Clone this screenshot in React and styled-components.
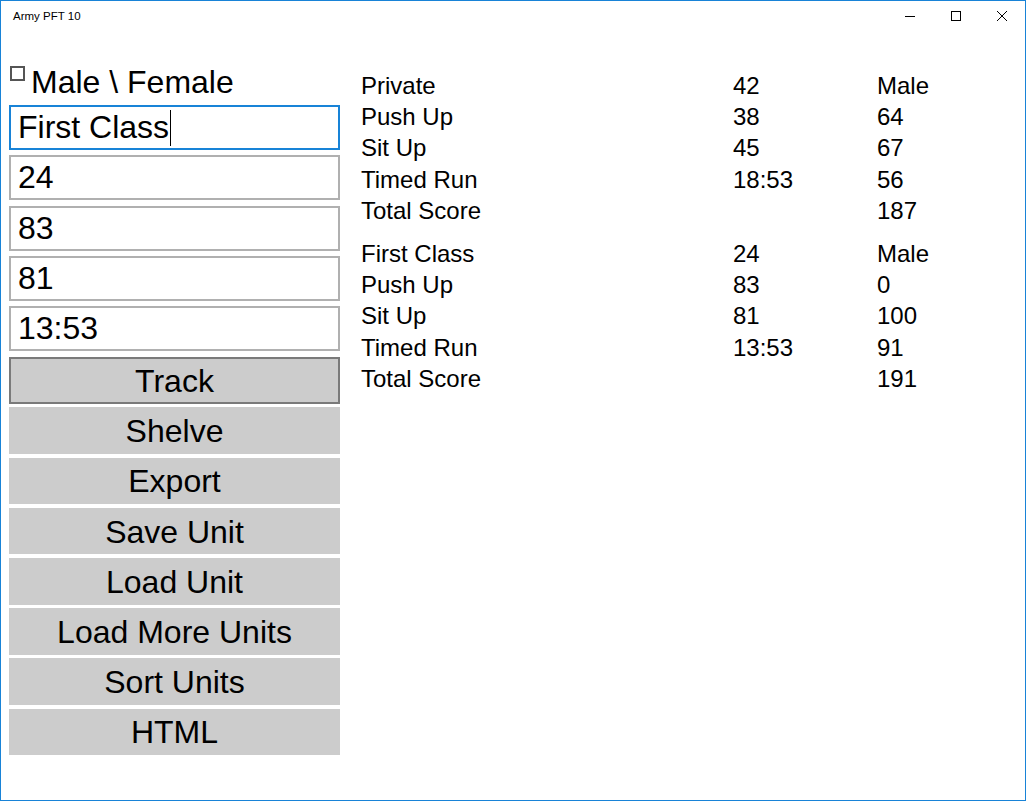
import React from "react";
import styled, { createGlobalStyle } from "styled-components";

const Global = createGlobalStyle`
  html, body { margin: 0; padding: 0; background: #fff; }
  * { box-sizing: border-box; }
`;

const Window = styled.div`
  width: 1026px;
  height: 801px;
  border: 1px solid #1883d7;
  background: #fff;
  display: flex;
  flex-direction: column;
  font-family: "Liberation Sans", Arial, sans-serif;
  color: #000;
  overflow: hidden;
`;

const TitleBar = styled.div`
  height: 31px;
  display: flex;
  align-items: center;
  justify-content: space-between;
  flex-shrink: 0;
`;

const Title = styled.div`
  font-family: "Liberation Sans", Arial, sans-serif;
  font-size: 11.5px;
  padding-left: 12px;
  padding-bottom: 2px;
`;

const Controls = styled.div`
  display: flex;
  height: 100%;
`;

const ControlButton = styled.div`
  width: 46px;
  height: 100%;
  display: flex;
  align-items: center;
  justify-content: center;
  padding-bottom: 1px;
`;

const Main = styled.div`
  display: flex;
  padding: 32px 0 0 8px;
  gap: 21px;
`;

const LeftColumn = styled.div`
  width: 331px;
  display: flex;
  flex-direction: column;
`;

const GenderRow = styled.label`
  display: flex;
  align-items: flex-start;
  height: 37px;
  gap: 6px;
  font-size: 32px;
  line-height: 37px;
  margin-bottom: 4px;
`;

const CheckBox = styled.span`
  width: 15px;
  height: 15px;
  margin: 2px 0 0 1px;
  border: 2px solid #555;
  background: #fff;
  flex-shrink: 0;
`;

const Fields = styled.div`
  display: flex;
  flex-direction: column;
  gap: 5.3px;
  margin-bottom: 6px;
`;

const Field = styled.div`
  height: 45px;
  border: 2px solid ${(p) => (p.$focused ? "#1883d7" : "#b0b0b0")};
  background: #fff;
  padding: 0 7px;
  font-size: 32px;
  line-height: 41px;
  white-space: nowrap;
  display: flex;
  align-items: center;
`;

const Caret = styled.span`
  display: inline-block;
  width: 1px;
  height: 36px;
  background: #000;
  margin-left: 1px;
`;

const Buttons = styled.div`
  display: flex;
  flex-direction: column;
  gap: 3.6px;
`;

const Button = styled.div`
  height: 46.6px;
  background: #cccccc;
  border: 2px solid ${(p) => (p.$hover ? "#7a7a7a" : "#cccccc")};
  font-size: 32px;
  display: flex;
  align-items: center;
  justify-content: center;
  padding-top: 2px;
`;

const RightColumn = styled.div`
  display: flex;
  flex-direction: column;
  gap: 12px;
  padding-top: 6px;
`;

const Group = styled.div`
  display: grid;
  grid-template-columns: 372px 144px 120px;
  font-size: 24px;
  line-height: 31.2px;
`;

const Cell = styled.div`
  white-space: nowrap;
`;

const fields = ["First Class", "24", "83", "81", "13:53"];
const buttons = ["Track", "Shelve", "Export", "Save Unit", "Load Unit", "Load More Units", "Sort Units", "HTML"];

const groups = [
  [
    ["Private", "42", "Male"],
    ["Push Up", "38", "64"],
    ["Sit Up", "45", "67"],
    ["Timed Run", "18:53", "56"],
    ["Total Score", "", "187"],
  ],
  [
    ["First Class", "24", "Male"],
    ["Push Up", "83", "0"],
    ["Sit Up", "81", "100"],
    ["Timed Run", "13:53", "91"],
    ["Total Score", "", "191"],
  ],
];

export default function App() {
  return (
    <>
      <Global />
      <Window>
        <TitleBar>
          <Title>Army PFT 10</Title>
          <Controls>
            <ControlButton>
              <svg width="10" height="10" viewBox="0 0 10 10">
                <line x1="0" y1="5.5" x2="10" y2="5.5" stroke="#000" strokeWidth="1" />
              </svg>
            </ControlButton>
            <ControlButton>
              <svg width="10" height="10" viewBox="0 0 10 10">
                <rect x="0.5" y="0.5" width="9" height="9" fill="none" stroke="#000" strokeWidth="1" />
              </svg>
            </ControlButton>
            <ControlButton>
              <svg width="10" height="10" viewBox="0 0 10 10">
                <path d="M0 0 L10 10 M10 0 L0 10" stroke="#000" strokeWidth="1" />
              </svg>
            </ControlButton>
          </Controls>
        </TitleBar>
        <Main>
          <LeftColumn>
            <GenderRow>
              <CheckBox />
              <span>Male \ Female</span>
            </GenderRow>
            <Fields>
              {fields.map((f, i) => (
                <Field key={i} $focused={i === 0}>
                  {f}
                  {i === 0 && <Caret />}
                </Field>
              ))}
            </Fields>
            <Buttons>
              {buttons.map((b, i) => (
                <Button key={b} $hover={i === 0}>
                  {b}
                </Button>
              ))}
            </Buttons>
          </LeftColumn>
          <RightColumn>
            {groups.map((g, gi) => (
              <Group key={gi}>
                {g.map((row, ri) =>
                  row.map((c, ci) => <Cell key={`${ri}-${ci}`}>{c}</Cell>)
                )}
              </Group>
            ))}
          </RightColumn>
        </Main>
      </Window>
    </>
  );
}
